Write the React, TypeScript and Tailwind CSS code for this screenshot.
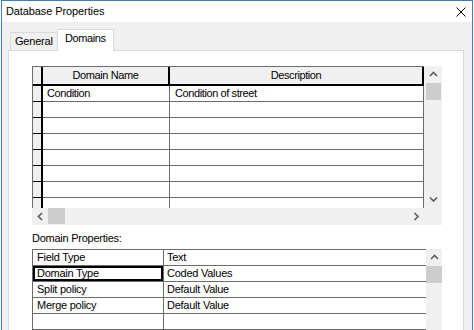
import React from "react"

type Dir = "up" | "down" | "left" | "right"

const Chevron = ({ dir }: { dir: Dir }) => {
  const vertical = dir === "up" || dir === "down"
  const points = {
    up: "1,5 4.5,1.5 8,5",
    down: "1,1.5 4.5,5 8,1.5",
    left: "5,1 1.5,4.5 5,8",
    right: "1.5,1 5,4.5 1.5,8",
  }[dir]
  return (
    <svg
      width={vertical ? 9 : 7}
      height={vertical ? 7 : 9}
      viewBox={vertical ? "0 0 9 7" : "0 0 7 9"}
    >
      <polyline points={points} fill="none" stroke="#606060" strokeWidth="1.7" />
    </svg>
  )
}

const domainRows = [
  ["Condition", "Condition of street"],
  ["", ""],
  ["", ""],
  ["", ""],
  ["", ""],
  ["", ""],
  ["", ""],
  ["", ""],
]

const propRows = [
  ["Field Type", "Text"],
  ["Domain Type", "Coded Values"],
  ["Split policy", "Default Value"],
  ["Merge policy", "Default Value"],
  ["", ""],
  ["", ""],
]

export default function App() {
  return (
    <div className="w-[474px] h-[330px] overflow-hidden bg-white text-black font-['Liberation_Sans',Arial,sans-serif] text-[11px] leading-[13px]">
      <div className="ml-[1px] w-[472px] h-full flex flex-col border-x border-t border-[#3b7fc9]">
        {/* Title bar */}
        <div className="h-[21px] shrink-0 bg-white flex items-center justify-between pl-[4px] pr-[6px]">
          <span className="tracking-[-0.1px]">Database Properties</span>
          <svg width="10" height="10" viewBox="0 0 10 10">
            <path d="M0.5 0.5 L9.5 9.5 M9.5 0.5 L0.5 9.5" stroke="#000" strokeWidth="1" />
          </svg>
        </div>

        {/* Body */}
        <div className="flex-1 flex flex-col bg-[#f0f0f0] pl-[6px] pr-[8px]">
          {/* Tabs */}
          <div className="h-[28px] shrink-0 flex items-end pl-[2px]">
            <div className="w-[47px] h-[18px] border-l border-t border-[#d9d9d9] bg-[#f0f0f0] pl-[4px] pt-[2px] tracking-[-0.2px]">
              General
            </div>
            <div className="relative z-10 -mb-px w-[57px] h-[22px] bg-white border-x border-t border-[#d9d9d9] pl-[7px] pt-[2px] tracking-[-0.4px]">
              Domains
            </div>
          </div>

          {/* Panel */}
          <div className="flex-1 bg-white border border-[#d9d9d9] pt-[15px] pl-[23px]">
            {/* Domains grid */}
            <div className="w-[410px] flex flex-col tracking-[-0.4px]">
              <div className="flex h-[142px]">
                <div className="w-[392px] h-full overflow-hidden border-l border-[#6b6b6b] flex flex-col">
                  <div className="flex h-[20px] shrink-0 border-t border-[#6b6b6b]">
                    <div className="w-[10px] bg-[#f0f0f0] border-r-2 border-b-2 border-black" />
                    <div className="w-[127px] bg-[#f0f0f0] border-r-2 border-b-2 border-black flex items-center justify-center">
                      Domain Name
                    </div>
                    <div className="flex-1 bg-[#f0f0f0] border-r-2 border-b-2 border-black flex items-center justify-center">
                      Description
                    </div>
                  </div>
                  {domainRows.map(([name, desc], i) => (
                    <div key={i} className="flex h-[16px] shrink-0">
                      <div className="w-[10px] bg-[#f0f0f0] border-r-2 border-b border-black" />
                      <div className="w-[127px] border-r border-b border-[#6b6b6b] pl-[4px] flex items-center">
                        {name}
                      </div>
                      <div className="flex-1 border-r border-b border-[#6b6b6b] pl-[5px] flex items-center">
                        {desc}
                      </div>
                    </div>
                  ))}
                </div>
                <div className="w-[18px] h-full bg-[#f0f0f0] flex flex-col">
                  <div className="h-[17px] flex items-center justify-center">
                    <Chevron dir="up" />
                  </div>
                  <div className="h-[17px] ml-[2px] mr-[1px] bg-[#cdcdcd]" />
                  <div className="flex-1" />
                  <div className="h-[17px] flex items-center justify-center">
                    <Chevron dir="down" />
                  </div>
                </div>
              </div>
              <div className="flex h-[17px] bg-[#f0f0f0]">
                <div className="w-[16px] flex items-center justify-center">
                  <Chevron dir="left" />
                </div>
                <div className="w-[17px] h-[16px] bg-[#cdcdcd]" />
                <div className="flex-1" />
                <div className="w-[16px] flex items-center justify-center">
                  <Chevron dir="right" />
                </div>
                <div className="w-[18px]" />
              </div>
            </div>

            {/* Domain properties */}
            <div className="mt-[7px] tracking-[-0.25px]">Domain Properties:</div>
            <div className="mt-[4px] w-[410px] flex tracking-[-0.25px]">
              <div className="w-[394px] border-l border-t border-[#6b6b6b] flex flex-col">
                {propRows.map(([k, v], i) => (
                  <div key={i} className="flex h-[16px] shrink-0">
                    <div className="w-[131px] border-r border-b border-[#6b6b6b]">
                      <div
                        className={
                          i === 1
                            ? "h-full flex items-center pl-[4px] ring-2 ring-inset ring-black"
                            : "h-full flex items-center pl-[4px]"
                        }
                      >
                        {k}
                      </div>
                    </div>
                    <div className="flex-1 border-b border-[#6b6b6b] pl-[3px] flex items-center">
                      {v}
                    </div>
                  </div>
                ))}
              </div>
              <div className="w-[16px] bg-[#f0f0f0] flex flex-col">
                <div className="h-[17px] flex items-center justify-center">
                  <Chevron dir="up" />
                </div>
                <div className="h-[17px] bg-[#cdcdcd]" />
                <div className="flex-1" />
              </div>
            </div>
          </div>
        </div>
      </div>
    </div>
  )
}
